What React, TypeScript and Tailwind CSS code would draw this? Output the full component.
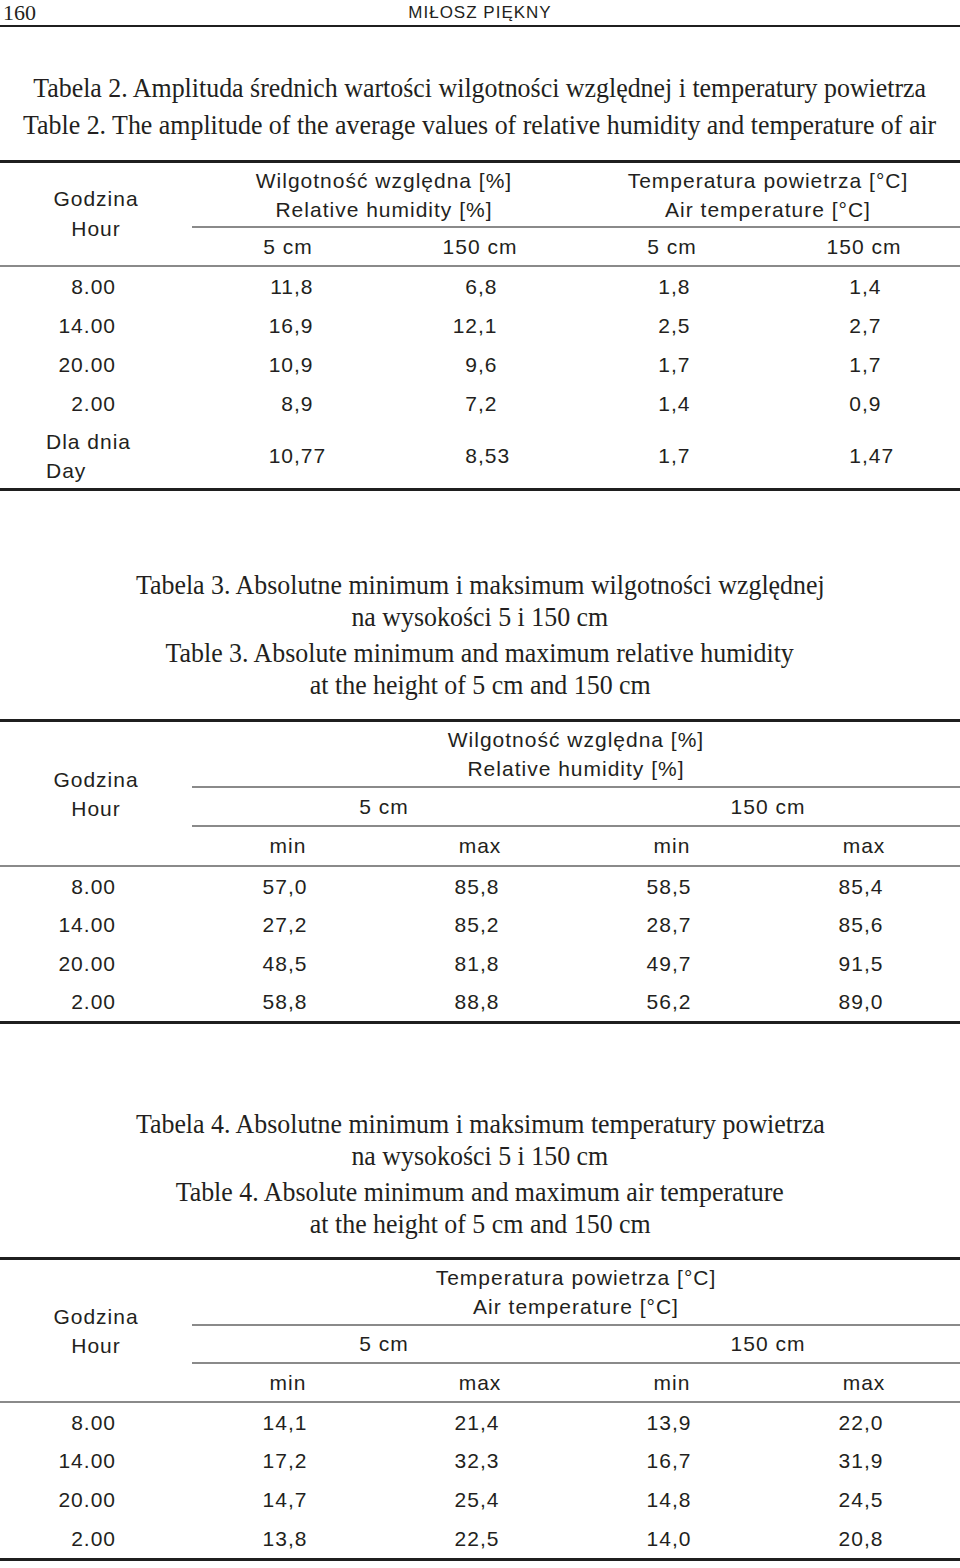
import React from "react";

const t2 = [
  ["8.00", "11,8", "6,8", "1,8", "1,4"],
  ["14.00", "16,9", "12,1", "2,5", "2,7"],
  ["20.00", "10,9", "9,6", "1,7", "1,7"],
  ["2.00", "8,9", "7,2", "1,4", "0,9"],
];
const t2day = ["10,77", "8,53", "1,7", "1,47"];
const t3 = [
  ["8.00", "57,0", "85,8", "58,5", "85,4"],
  ["14.00", "27,2", "85,2", "28,7", "85,6"],
  ["20.00", "48,5", "81,8", "49,7", "91,5"],
  ["2.00", "58,8", "88,8", "56,2", "89,0"],
];
const t4 = [
  ["8.00", "14,1", "21,4", "13,9", "22,0"],
  ["14.00", "17,2", "32,3", "16,7", "31,9"],
  ["20.00", "14,7", "25,4", "14,8", "24,5"],
  ["2.00", "13,8", "22,5", "14,0", "20,8"],
];

const decPads = ["pl-[42px]", "pl-[34px]", "pl-[35px]", "pl-[34px]"];

function Dec({ v, pl }: { v: string; pl: string }) {
  const [a, b] = v.split(",");
  return (
    <div className={`flex items-center ${pl}`}>
      <span className="inline-block w-[60px] text-right">{a}</span>
      <span>,{b}</span>
    </div>
  );
}

function Title({ paras }: { paras: string[][] }) {
  return (
    <div className="flex flex-col gap-[5px] font-['Liberation_Serif',serif] text-[28px] leading-[31.5px] tracking-normal">
      {paras.map((p, i) => (
        <div key={i}>
          {p.map((l, j) => (
            <div key={j} className="flex justify-center">
              <span className="inline-block whitespace-nowrap scale-x-[0.925]">{l}</span>
            </div>
          ))}
        </div>
      ))}
    </div>
  );
}

function MinMaxTable({
  group,
  rows,
  headRows,
  dataRow,
}: {
  group: [string, string];
  rows: string[][];
  headRows: string;
  dataRow: string;
}) {
  return (
    <div className="border-t-[3px] border-b-[3px] border-[#1f1f1f]">
      <div className={`grid grid-cols-5 ${headRows} border-b-2 border-[#8a8a8a]`}>
        <div className="row-span-3 flex flex-col items-center justify-center leading-[29px]">
          <div>Godzina</div>
          <div>Hour</div>
        </div>
        <div className="col-span-4 flex flex-col items-center justify-center border-b-2 border-[#8a8a8a] leading-[29px]">
          <div>{group[0]}</div>
          <div>{group[1]}</div>
        </div>
        <div className="col-span-2 flex items-center justify-center border-b-2 border-[#8a8a8a]">5 cm</div>
        <div className="col-span-2 flex items-center justify-center border-b-2 border-[#8a8a8a]">150 cm</div>
        <div className="flex items-center justify-center">min</div>
        <div className="flex items-center justify-center">max</div>
        <div className="flex items-center justify-center">min</div>
        <div className="flex items-center justify-center">max</div>
      </div>
      {rows.map((r, i) => (
        <div key={i} className={`grid grid-cols-5 ${dataRow} items-center`}>
          <div className="text-right pr-[76px]">{r[0]}</div>
          {r.slice(1).map((v, j) => (
            <div key={j} className="text-center pr-[6px]">
              {v}
            </div>
          ))}
        </div>
      ))}
    </div>
  );
}

export default function App() {
  return (
    <div className="w-[960px] h-[1568px] overflow-hidden bg-white text-[#231f20] font-['Liberation_Sans',Arial,sans-serif] text-[21px] tracking-[1px]">
      {/* page header */}
      <div className="grid grid-cols-[1fr_auto_1fr] items-center h-[27px] border-b-2 border-[#1f1f1f]">
        <div className="pl-[3px] font-['Liberation_Serif',serif] text-[22px] tracking-normal leading-[24px]">160</div>
        <div className="text-[17px] leading-[24px]">MIŁOSZ PIĘKNY</div>
        <div />
      </div>

      {/* Table 2 */}
      <div className="mt-[45px]">
        <Title
          paras={[
            ["Tabela 2. Amplituda średnich wartości wilgotności względnej i temperatury powietrza"],
            ["Table 2. The amplitude of the average values of relative humidity and temperature of air"],
          ]}
        />
      </div>
      <div className="mt-[20px] border-t-[3px] border-b-[3px] border-[#1f1f1f]">
        <div className="grid grid-cols-5 grid-rows-[65px_37px] border-b-2 border-[#8a8a8a]">
          <div className="row-span-2 flex flex-col items-center justify-center leading-[30px]">
            <div>Godzina</div>
            <div>Hour</div>
          </div>
          <div className="col-span-2 flex flex-col items-center justify-center border-b-2 border-[#8a8a8a] leading-[29px]">
            <div>Wilgotność względna [%]</div>
            <div>Relative humidity [%]</div>
          </div>
          <div className="col-span-2 flex flex-col items-center justify-center border-b-2 border-[#8a8a8a] leading-[29px]">
            <div>Temperatura powietrza [°C]</div>
            <div>Air temperature [°C]</div>
          </div>
          <div className="flex items-center justify-center">5 cm</div>
          <div className="flex items-center justify-center">150 cm</div>
          <div className="flex items-center justify-center">5 cm</div>
          <div className="flex items-center justify-center">150 cm</div>
        </div>
        {t2.map((r, i) => (
          <div key={i} className="grid grid-cols-5 h-[39px] items-center">
            <div className="text-right pr-[76px]">{r[0]}</div>
            {r.slice(1).map((v, j) => (
              <Dec key={j} v={v} pl={decPads[j]} />
            ))}
          </div>
        ))}
        <div className="grid grid-cols-5 h-[65px] items-center">
          <div className="pl-[46px] leading-[29px]">
            <div>Dla dnia</div>
            <div>Day</div>
          </div>
          {t2day.map((v, j) => (
            <Dec key={j} v={v} pl={decPads[j]} />
          ))}
        </div>
      </div>

      {/* Table 3 */}
      <div className="mt-[78px]">
        <Title
          paras={[
            ["Tabela 3. Absolutne minimum i maksimum wilgotności względnej", "na wysokości 5 i 150 cm"],
            ["Table 3. Absolute minimum and maximum relative humidity", "at the height of 5 cm and 150 cm"],
          ]}
        />
      </div>
      <div className="mt-[19px]">
        <MinMaxTable
          group={["Wilgotność względna [%]", "Relative humidity [%]"]}
          rows={t3}
          headRows="grid-rows-[66px_39px_38px]"
          dataRow="h-[38.5px]"
        />
      </div>

      {/* Table 4 */}
      <div className="mt-[84px]">
        <Title
          paras={[
            ["Tabela 4. Absolutne minimum i maksimum temperatury powietrza", "na wysokości 5 i 150 cm"],
            ["Table 4. Absolute minimum and maximum air temperature", "at the height of 5 cm and 150 cm"],
          ]}
        />
      </div>
      <div className="mt-[18px]">
        <MinMaxTable
          group={["Temperatura powietrza [°C]", "Air temperature [°C]"]}
          rows={t4}
          headRows="grid-rows-[66px_38px_37px]"
          dataRow="h-[38.75px]"
        />
      </div>
    </div>
  );
}
